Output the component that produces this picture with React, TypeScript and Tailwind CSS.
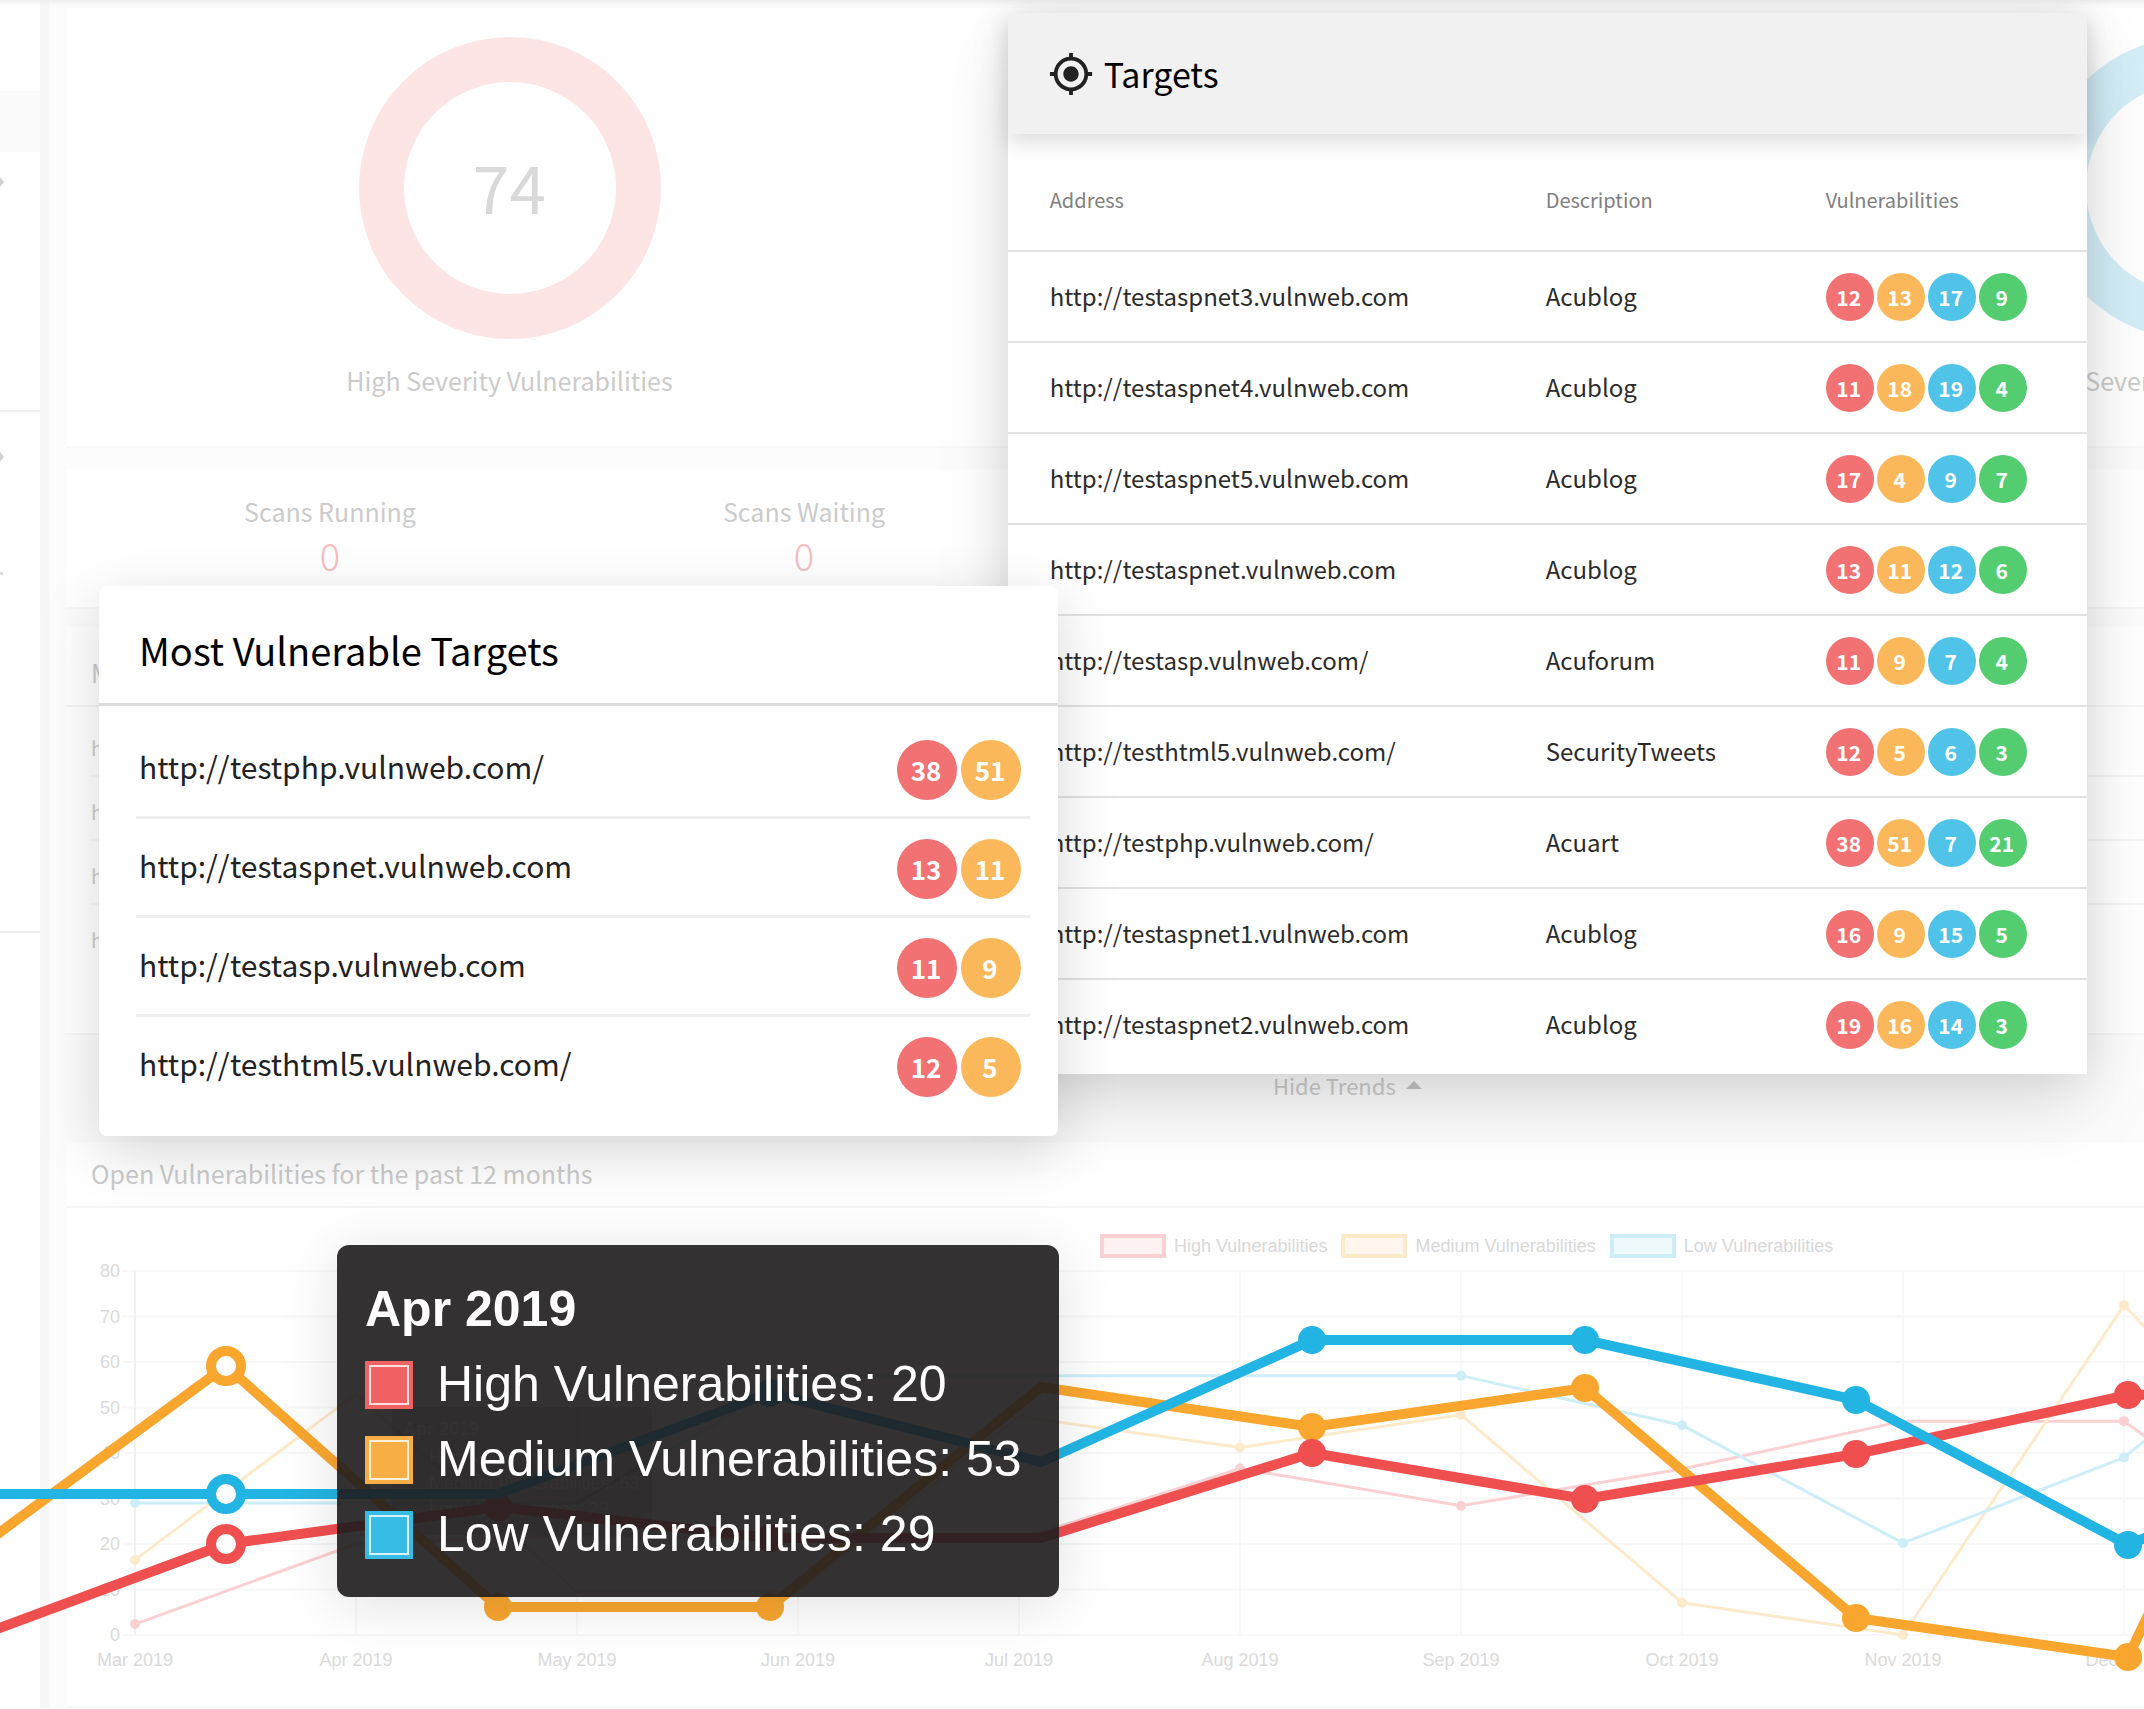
import React from 'react';
import { MdMyLocation } from 'react-icons/md';

const targets = [
  { address: 'http://testaspnet3.vulnweb.com', description: 'Acublog', counts: [12, 13, 17, 9] },
  { address: 'http://testaspnet4.vulnweb.com', description: 'Acublog', counts: [11, 18, 19, 4] },
  { address: 'http://testaspnet5.vulnweb.com', description: 'Acublog', counts: [17, 4, 9, 7] },
  { address: 'http://testaspnet.vulnweb.com', description: 'Acublog', counts: [13, 11, 12, 6] },
  { address: 'http://testasp.vulnweb.com/', description: 'Acuforum', counts: [11, 9, 7, 4] },
  { address: 'http://testhtml5.vulnweb.com/', description: 'SecurityTweets', counts: [12, 5, 6, 3] },
  { address: 'http://testphp.vulnweb.com/', description: 'Acuart', counts: [38, 51, 7, 21] },
  { address: 'http://testaspnet1.vulnweb.com', description: 'Acublog', counts: [16, 9, 15, 5] },
  { address: 'http://testaspnet2.vulnweb.com', description: 'Acublog', counts: [19, 16, 14, 3] },
];

const mostVulnerable = [
  { address: 'http://testphp.vulnweb.com/', counts: [38, 51] },
  { address: 'http://testaspnet.vulnweb.com', counts: [13, 11] },
  { address: 'http://testasp.vulnweb.com', counts: [11, 9] },
  { address: 'http://testhtml5.vulnweb.com/', counts: [12, 5] },
];

const severityColors = ['bg-[#f27172]', 'bg-[#fbb85a]', 'bg-[#4fc3e8]', 'bg-[#53cd70]'];

const months = ['Mar', 'Apr', 'May', 'Jun', 'Jul', 'Aug', 'Sep', 'Oct', 'Nov', 'Dec'];

// Monthly values; `dots` lists the months that carry a marker
const trends = [
  { name: 'High Vulnerabilities', color: '#fbd0d2', swatch: 'border-[#fbd0d2] bg-[#fef1f1]', values: [2.4, 20, 22, 21, 21, 36.6, 28.4, 36.5, 47, 47, 12], dots: [0, 5, 6, 9] },
  { name: 'Medium Vulnerabilities', color: '#fdeacb', swatch: 'border-[#fdeacb] bg-[#fff7ee]', values: [16.5, 53, 9.5, 9.5, 48, 41.2, 48.4, 7.1, 0, 72.5, 21], dots: [0, 5, 6, 7, 8, 9] },
  { name: 'Low Vulnerabilities', color: '#cdeef8', swatch: 'border-[#cdeef8] bg-[#effafd]', values: [29, 29, 29, 57, 57, 57, 57, 46.1, 20.2, 39, 79], dots: [0, 6, 7, 8, 9] },
];

const highlights = [
  {
    color: '#f9a62f',
    points: [[-46, 326], [226, 126], [498, 367], [770, 367], [1041, 147], [1312, 187], [1585, 148], [1856, 378], [2128, 417], [2400, -150]],
    dots: [2, 3, 5, 6, 7, 8],
  },
  {
    color: '#f04f50',
    points: [[-46, 405], [226, 304], [498, 267], [770, 298], [1041, 298], [1312, 213], [1585, 259], [1856, 214], [2128, 155], [2400, 150]],
    dots: [2, 3, 5, 6, 7, 8],
  },
  {
    color: '#22b5e4',
    points: [[-46, 254], [226, 254], [498, 254], [770, 153], [1041, 222], [1312, 100], [1585, 100], [1856, 160], [2128, 305], [2400, 190]],
    dots: [3, 5, 6, 7, 8],
  },
];

const tooltipRows = [
  { label: 'High Vulnerabilities: 20', color: 'bg-[#f06263]' },
  { label: 'Medium Vulnerabilities: 53', color: 'bg-[#f8ad45]' },
  { label: 'Low Vulnerabilities: 29', color: 'bg-[#37bce6]' },
];

function Donut({ label, value, color }: { label: string; value?: number; color: string }) {
  return (
    <div className="flex w-[841px] shrink-0 flex-col items-center">
      <div className={`flex size-[302px] items-center justify-center rounded-full border-[45px] ${color}`}>
        <span className="pb-1.5 text-[66px] leading-[80px] text-[#d9d9d9]">{value}</span>
      </div>
      <div className="mt-[23px] text-[25px] leading-9">{label}</div>
    </div>
  );
}

function ScanCount({ label, value }: { label: string; value: number }) {
  return (
    <div className="flex w-[474px] shrink-0 flex-col items-center">
      <div className="text-[25px] leading-9">{label}</div>
      <div className="mt-0.5 text-[38px] leading-[48px] font-light text-[#f8bcbe]">{value}</div>
    </div>
  );
}

function Sidebar() {
  return (
    <aside className="flex w-10 shrink-0 flex-col bg-white pt-[91px]">
      <div className="h-[61px] bg-[#fbfbfb]" />
      <div className="flex h-[260px] border-b-2 border-[#f0f0f0] pt-[25px]">
        <Caret />
      </div>
      <div className="flex h-[521px] flex-col gap-[110px] border-b-2 border-[#f0f0f0] pt-10">
        <Caret />
        <div className="size-[3px] bg-[#dedede]" />
      </div>
    </aside>
  );
}

function Caret() {
  return (
    <svg className="h-2.5 w-1" viewBox="0 0 4 10">
      <path d="M0 0 L4 5 L0 10 Z" fill="#d2d2d2" />
    </svg>
  );
}

function TrendChart() {
  const px = (i: number) => 69 + i * 221;
  const py = (v: number) => 375 - v * 4.55;

  return (
    <svg className="block h-[446px] w-full" fontFamily="'Liberation Sans', sans-serif" fontSize="18" fill="#dadada">
      {[0, 10, 20, 30, 40, 50, 60, 70, 80].map((v) => (
        <g key={v}>
          <line x1="56" x2="2600" y1={py(v)} y2={py(v)} stroke="#f8f8f8" strokeWidth="2" />
          <text x="54" y={py(v) + 6} textAnchor="end">{v}</text>
        </g>
      ))}
      {months.map((m, i) => (
        <g key={m}>
          <line x1={px(i)} x2={px(i)} y1={py(80)} y2={py(0)} stroke={i === 0 ? '#f1f1f1' : '#f8f8f8'} strokeWidth="2" />
          <text x={px(i)} y="406" textAnchor="middle">{m} 2019</text>
        </g>
      ))}
      {trends.map((t) => (
        <g key={t.name}>
          <polyline points={t.values.map((v, i) => `${px(i)},${py(v)}`).join(' ')} fill="none" stroke={t.color} strokeWidth="3" />
          {t.dots.map((i) => (
            <circle key={i} cx={px(i)} cy={py(t.values[i])} r="5" fill={t.color} />
          ))}
        </g>
      ))}
      <g opacity="0.2">
        <rect x="326" y="147" width="260" height="128" rx="6" fill="#000" />
        <g fill="#fff">
          <text x="337" y="175" fontWeight="bold">Apr 2019</text>
          {tooltipRows.map((r, i) => (
            <text key={r.label} x="363" y={203 + i * 26}>{r.label}</text>
          ))}
        </g>
      </g>
    </svg>
  );
}

function HighlightChart() {
  return (
    <svg className="pointer-events-none absolute top-[1240px] left-0 h-[460px] w-full">
      {highlights.map((s) => (
        <g key={s.color}>
          <polyline points={s.points.map((p) => p.join(',')).join(' ')} fill="none" stroke={s.color} strokeWidth="10" />
          {s.dots.map((i) => (
            <circle key={i} cx={s.points[i][0]} cy={s.points[i][1]} r="14" fill={s.color} />
          ))}
          <circle cx={s.points[1][0]} cy={s.points[1][1]} r="15" fill="#fff" stroke={s.color} strokeWidth="10" />
        </g>
      ))}
    </svg>
  );
}

function Dashboard() {
  return (
    <div className="flex overflow-hidden text-[#cbcbcb]">
      <Sidebar />
      <div className="w-2.5 shrink-0 bg-[#f7f7f7]" />
      <main className="min-w-0 flex-1 bg-[#fcfcfc] pt-2 pl-4">
        <section className="h-[440px] overflow-hidden border-b-2 border-[#f8f8f8] bg-white pt-[29px] pl-[23px]">
          <div className="flex gap-[841px]">
            <Donut label="High Severity Vulnerabilities" value={74} color="border-[#fde5e5]" />
            <Donut label="Low Severity Vulnerabilities" color="border-[#d3eef7]" />
          </div>
        </section>

        <section className="mt-[21px] flex h-[140px] overflow-hidden border-b-2 border-[#f8f8f8] bg-white pt-6 pl-[27px]">
          <ScanCount label="Scans Running" value={0} />
          <ScanCount label="Scans Waiting" value={0} />
        </section>

        <section className="mt-[18px] border-b-2 border-[#f8f8f8] bg-white pb-16">
          <h2 className="h-[80px] border-b-2 border-[#f5f5f5] pt-[27px] pl-[25px] text-[25px] leading-9">Most Vulnerable Targets</h2>
          <ul className="pt-1.5 pl-[25px]">
            {mostVulnerable.map((t) => (
              <li key={t.address} className="h-16 border-b-2 border-[#f8f8f8] pt-1.5 text-[20px] leading-[58px] last:border-0">{t.address}</li>
            ))}
          </ul>
        </section>

        <div className="flex h-[108px] items-center pb-2 pl-[1207px]">
          <button type="button" className="flex items-center gap-2.5 text-[22px] leading-8">
            Hide Trends
            <svg className="h-2 w-4" viewBox="0 0 16 8">
              <path d="M8 0 L16 8 H0 Z" fill="#c4c4c4" />
            </svg>
          </button>
        </div>

        <section className="border-b-2 border-[#f8f8f8] bg-white">
          <h2 className="h-[65px] border-b-2 border-[#f5f5f5] pt-3 pl-[25px] text-[25px] leading-9">Open Vulnerabilities for the past 12 months</h2>
          <div className="flex h-[52px] items-end gap-3.5 pb-0.5 pl-[1034px] font-['Liberation_Sans',sans-serif] text-[18px] text-[#d8d8d8]">
            {trends.map((t) => (
              <div key={t.name} className="flex shrink-0 items-center gap-2 leading-6">
                <span className={`h-6 w-[66px] border-4 ${t.swatch}`} />
                {t.name}
              </div>
            ))}
          </div>
          <TrendChart />
        </section>
      </main>
      <div className="absolute inset-x-0 top-0 h-1.5 bg-gradient-to-b from-[#eeeeee] to-transparent" />
    </div>
  );
}

function TargetsCard() {
  return (
    <section className="absolute top-[13px] right-[57px] left-[47%] bg-white pb-1 shadow-[0_30px_70px_rgba(0,0,0,0.13),0_0_40px_rgba(0,0,0,0.08)]">
      <header className="relative flex h-[121px] items-center gap-2.5 bg-[#f1f1f1] pl-10 shadow-[0_8px_20px_rgba(0,0,0,0.14)]">
        <MdMyLocation className="size-[46px] text-[#222]" />
        <h2 className="text-[34px] leading-[50px] text-black">Targets</h2>
      </header>
      <table className="w-full table-fixed text-left text-[#2b2b2b]">
        <thead>
          <tr className="h-[117px] border-b-2 border-[#e2e2e2] text-[20px] text-[#808080]">
            <th className="w-[538px] pt-4 pl-[42px] font-normal">Address</th>
            <th className="w-[280px] pt-4 font-normal">Description</th>
            <th className="pt-4 font-normal">Vulnerabilities</th>
          </tr>
        </thead>
        <tbody>
          {targets.map((t) => (
            <tr key={t.address} className="h-[91px] border-b-2 border-[#e2e2e2] text-[24px] last:border-0">
              <td className="pb-0.5 pl-[42px]">{t.address}</td>
              <td className="pb-0.5">{t.description}</td>
              <td>
                <div className="flex gap-[3px]">
                  {t.counts.map((n, i) => (
                    <span key={i} className={`flex size-12 items-center justify-center rounded-full pr-0.5 text-[21px] leading-8 font-bold text-white ${severityColors[i]}`}>
                      {n}
                    </span>
                  ))}
                </div>
              </td>
            </tr>
          ))}
        </tbody>
      </table>
    </section>
  );
}

function MostVulnerableCard() {
  return (
    <section className="absolute top-[586px] left-[99px] w-[959px] rounded-lg bg-white pb-5 text-[#222] shadow-[0_16px_60px_rgba(0,0,0,0.16)]">
      <h2 className="h-[120px] border-b-[3px] border-[#dcdcdc] pt-9 pl-10 text-[38px] leading-[56px] text-black">Most Vulnerable Targets</h2>
      <ul className="pt-3.5 pr-7 pl-[37px]">
        {mostVulnerable.map((t) => (
          <li key={t.address} className="flex h-[99px] items-center justify-between border-b-[3px] border-[#efefef] pr-[9px] pb-1 pl-[3px] text-[30px] leading-[46px] last:border-transparent">
            {t.address}
            <span className="flex gap-1 pt-2">
              {t.counts.map((n, i) => (
                <span key={i} className={`flex size-[60px] items-center justify-center rounded-full pr-0.5 text-[26px] leading-10 font-bold text-white ${severityColors[i]}`}>
                  {n}
                </span>
              ))}
            </span>
          </li>
        ))}
      </ul>
    </section>
  );
}

function ChartTooltip() {
  return (
    <div
      role="tooltip"
      className="absolute top-[1245px] left-[337px] w-[722px] rounded-xl bg-[#1f1d1e]/91 px-7 pt-[27px] pb-[25px] font-['Liberation_Sans',sans-serif] text-[50px] leading-[75px] whitespace-nowrap text-white shadow-[0_8px_60px_rgba(0,0,0,0.12)]"
    >
      <div className="font-bold">Apr 2019</div>
      {tooltipRows.map((r) => (
        <div key={r.label} className="flex items-center gap-6">
          <span className={`size-12 p-1 ${r.color}`}>
            <span className="block size-full border-2 border-white/80" />
          </span>
          {r.label}
        </div>
      ))}
    </div>
  );
}

export default function App() {
  return (
    <div className="relative overflow-hidden bg-white font-['Noto_Sans_CJK_SC',sans-serif]">
      <Dashboard />
      <TargetsCard />
      <MostVulnerableCard />
      <HighlightChart />
      <ChartTooltip />
    </div>
  );
}
